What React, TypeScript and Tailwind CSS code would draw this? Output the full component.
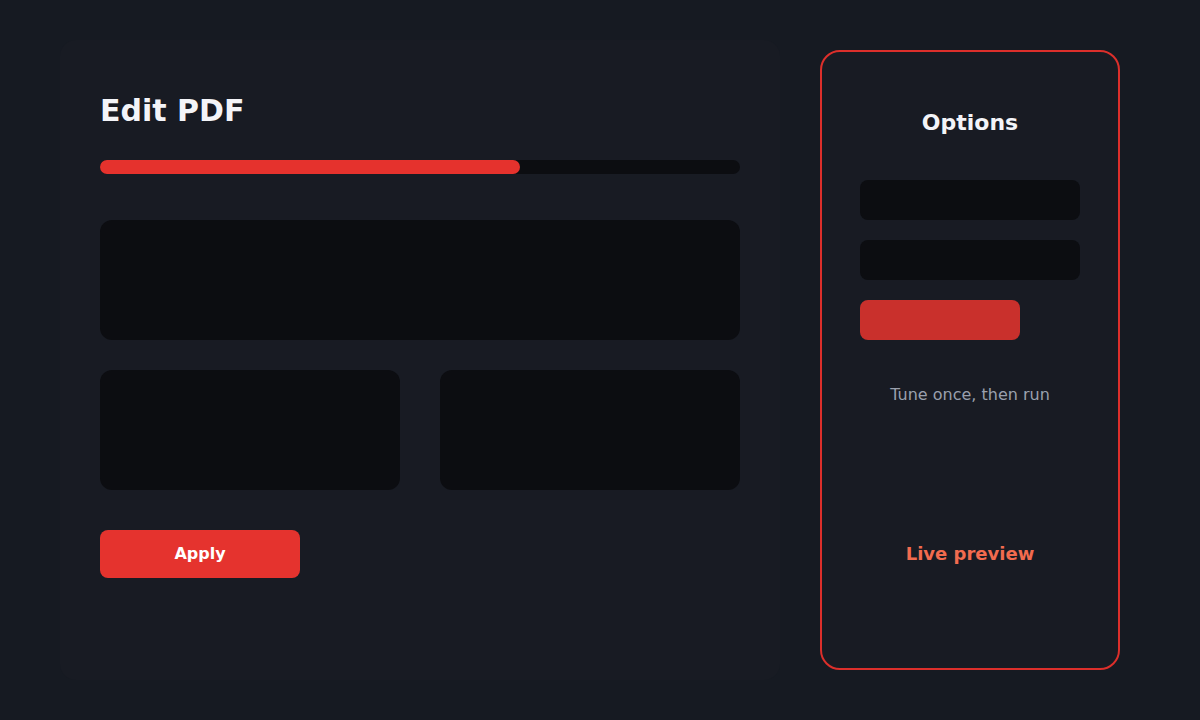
export default function App() {
  const progress = 65.625;

  return (
    <div
      className="flex h-[720px] w-[1200px] items-center gap-10 bg-[#161a22] pl-[60px]"
      style={{ fontFamily: '"DejaVu Sans", Verdana, sans-serif' }}
    >
      {/* Editor panel */}
      <section className="flex h-[640px] w-[720px] flex-col rounded-2xl bg-[#181b23] px-10 pt-[53px]">
        <h1 className="text-[30px] font-bold leading-[36px] text-[#f3f4f8]">Edit PDF</h1>

        <div className="mt-[31px] h-[14px] w-full rounded-full bg-[#0c0d11]">
          <div className="h-full rounded-full bg-[#e5322d]" style={{ width: `${progress}%` }} />
        </div>

        <div className="mt-[46px] h-[120px] rounded-xl bg-[#0c0d11]" />

        <div className="mt-[30px] grid grid-cols-2 gap-10">
          <div className="h-[120px] rounded-xl bg-[#0c0d11]" />
          <div className="h-[120px] rounded-xl bg-[#0c0d11]" />
        </div>

        <button className="mt-10 h-12 w-[200px] rounded-lg bg-[#e5332e] text-base font-bold text-white">
          Apply
        </button>
      </section>

      {/* Options card */}
      <aside className="flex h-[620px] w-[300px] flex-col items-center rounded-[20px] border-2 border-[#dc2f2b] bg-[#181b23] px-[38px] pt-[57px]">
        <h2 className="text-[22px] font-bold leading-[28px] text-[#f3f4f8]">Options</h2>

        <div className="mt-[43px] h-10 w-full rounded-lg bg-[#0c0d11]" />
        <div className="mt-5 h-10 w-full rounded-lg bg-[#0c0d11]" />
        <div className="mt-5 h-10 w-[160px] self-start rounded-lg bg-[#c9302c]" />

        <p className="mt-[43px] text-base leading-6 text-[#9aa0ad]">Tune once, then run</p>

        <p className="mt-[133px] text-lg font-bold leading-7 text-[#f26b4f]">Live preview</p>
      </aside>
    </div>
  );
}
